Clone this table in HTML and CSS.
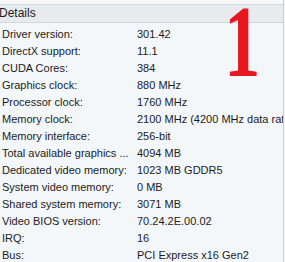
FILE: index.html
```html
<!DOCTYPE html>
<html>
<head>
<meta charset="utf-8">
<link rel="stylesheet" href="styles.css">
</head>
<body>
<div class="panel">
  <div class="topstrip"></div>
  <div class="header">Details</div>
  <div class="content">
    <div class="big">1</div>
    <div class="row"><span class="k">Driver version:</span><span class="v">301.42</span></div>
    <div class="row"><span class="k">DirectX support:</span><span class="v">11.1</span></div>
    <div class="row"><span class="k">CUDA Cores:</span><span class="v">384</span></div>
    <div class="row"><span class="k">Graphics clock:</span><span class="v">880 MHz</span></div>
    <div class="row"><span class="k">Processor clock:</span><span class="v">1760 MHz</span></div>
    <div class="row"><span class="k">Memory clock:</span><span class="v">2100 MHz (4200 MHz data rate)</span></div>
    <div class="row"><span class="k">Memory interface:</span><span class="v">256-bit</span></div>
    <div class="row"><span class="k">Total available graphics ...</span><span class="v">4094 MB</span></div>
    <div class="row"><span class="k">Dedicated video memory:</span><span class="v">1023 MB GDDR5</span></div>
    <div class="row"><span class="k">System video memory:</span><span class="v">0 MB</span></div>
    <div class="row"><span class="k">Shared system memory:</span><span class="v">3071 MB</span></div>
    <div class="row"><span class="k">Video BIOS version:</span><span class="v">70.24.2E.00.02</span></div>
    <div class="row"><span class="k">IRQ:</span><span class="v">16</span></div>
    <div class="row"><span class="k">Bus:</span><span class="v">PCI Express x16 Gen2</span></div>
  </div>
</div>
</body>
</html>
```
FILE: styles.css
```css
html, body {
  margin: 0;
  padding: 0;
  background: #f4f7fa;
}
.panel {
  width: 283px;
  height: 262px;
  border-right: 1px solid #c9ced4;
  overflow: hidden;
  font-family: "Liberation Sans", Arial, sans-serif;
  font-size: 11px;
  color: #1b1b1b;
  background: #f4f7fa;
}
.topstrip {
  height: 4px;
  background: #f7f8f9;
  border-bottom: 1px solid #d6dadf;
}
.header {
  height: 17px;
  line-height: 17px;
  font-size: 12px;
  background: #e8ebee;
  border-bottom: 1px solid #d3d7dc;
  margin-left: -1px;
}
.content {
  position: relative;
  padding-top: 3px;
}
.big {
  position: absolute;
  left: 224px;
  top: -31px;
  font-family: "Liberation Serif", serif;
  font-weight: bold;
  font-size: 101px;
  line-height: 1;
  color: #e8161e;
  transform: scaleX(0.72);
  transform-origin: left top;
}
.row {
  display: flex;
  height: 17px;
  line-height: 17px;
  white-space: nowrap;
}
.k {
  width: 137px;
  padding-left: 2px;
  flex: none;
  box-sizing: border-box;
  overflow: hidden;
}
.v {
  flex: 1;
  min-width: 0;
  overflow: hidden;
}
```
